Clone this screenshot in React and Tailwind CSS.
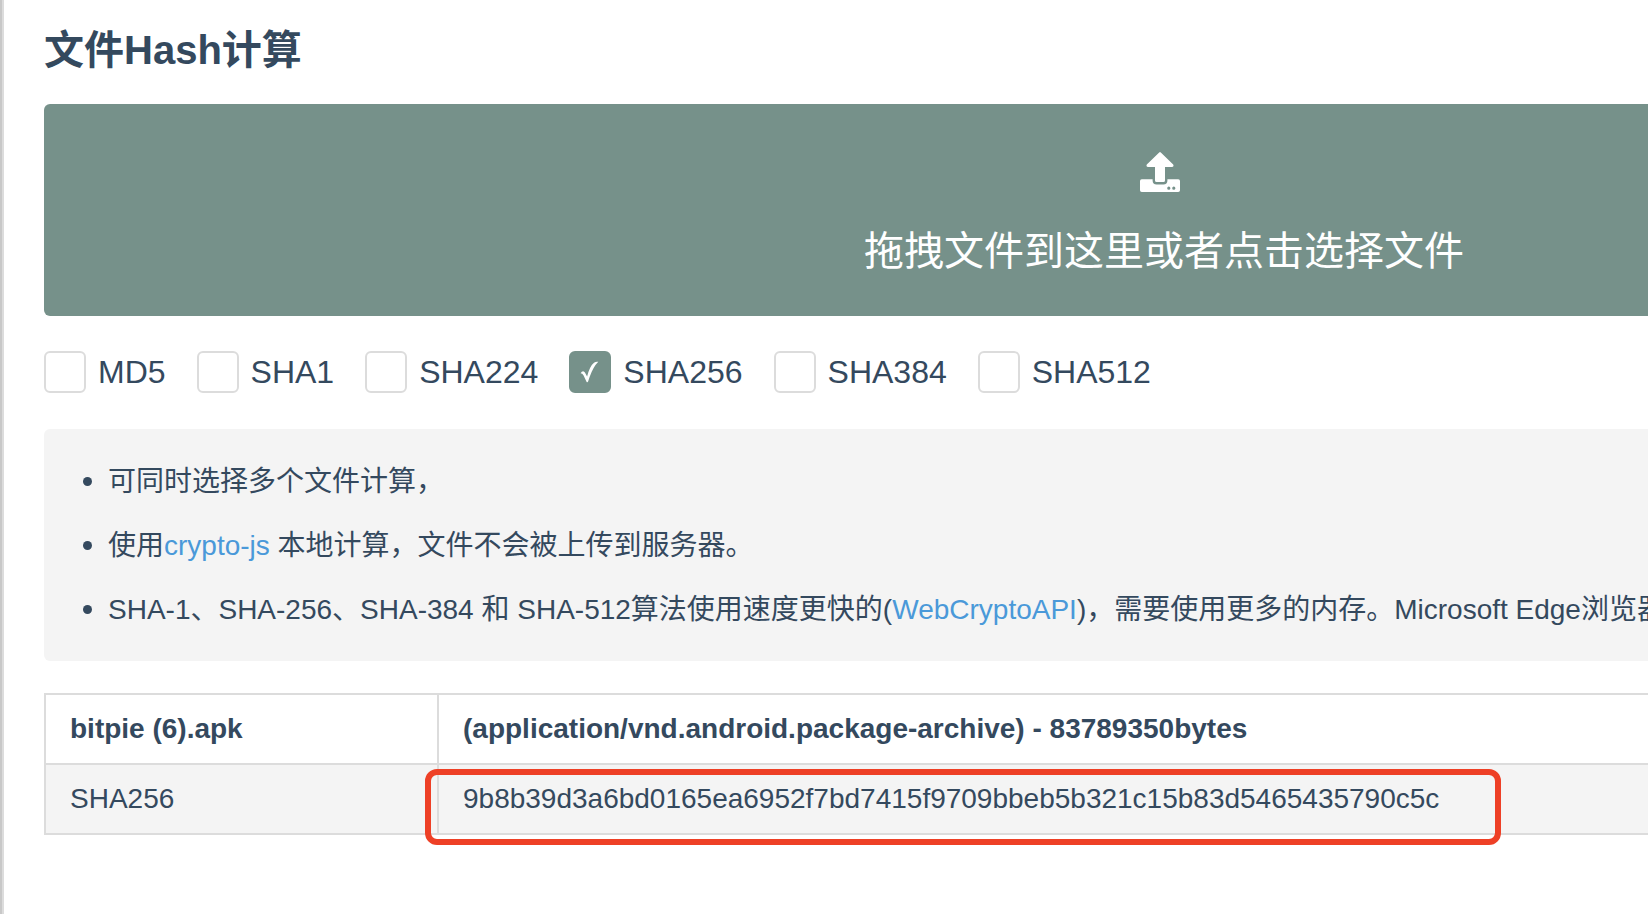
/** File Hash Page */
import React, { useRef, useState } from 'react';

const ALGORITHMS = ['MD5', 'SHA1', 'SHA224', 'SHA256', 'SHA384', 'SHA512'];

const RESULTS = [
  {
    name: 'bitpie (6).apk',
    info: '(application/vnd.android.package-archive) - 83789350bytes',
    hashes: [
      { algorithm: 'SHA256', value: '9b8b39d3a6bd0165ea6952f7bd7415f9709bbeb5b321c15b83d5465435790c5c' },
    ],
  },
];

const UploadIcon = () => (
  <svg className="w-10 h-10" viewBox="0 0 40 40" fill="currentColor" aria-hidden="true">
    <path d="M19.2 0.5 Q20 -0.3 20.8 0.5 L33.2 12.6 Q34.2 14.8 32.2 15 H25 V28.4 Q25 30 23.4 30 H16.6 Q15 30 15 28.4 V15 H7.8 Q5.8 14.8 6.8 12.6 Z" />
    <path
      fillRule="evenodd"
      d="M1.8 27.3 H12.6 V28.4 Q12.6 32.4 16.6 32.4 H23.4 Q27.4 32.4 27.4 28.4 V27.3 H38.2 Q40 27.3 40 29.1 V38.2 Q40 40 38.2 40 H1.8 Q0 40 0 38.2 V29.1 Q0 27.3 1.8 27.3 Z M28.8 34.6 a1.6 1.6 0 1 0 0 3.2 a1.6 1.6 0 1 0 0 -3.2 Z M33.8 34.6 a1.6 1.6 0 1 0 0 3.2 a1.6 1.6 0 1 0 0 -3.2 Z"
    />
  </svg>
);

const AlgorithmCheckbox = ({ name, checked, onChange }) => (
  <label className="flex items-center gap-3 text-[32px] leading-[42px] cursor-pointer">
    <span className="relative flex">
      <input
        type="checkbox"
        checked={checked}
        onChange={onChange}
        className="peer appearance-none w-[42px] h-[42px] rounded-md border-2 border-[#dcdcdc] bg-white checked:border-[#76918a] checked:bg-[#76918a]"
      />
      <svg
        className="absolute inset-0 w-full h-full text-white pointer-events-none hidden peer-checked:block"
        viewBox="0 0 42 42"
        fill="currentColor"
        aria-hidden="true"
      >
        <path d="M11.6 22.2 Q13 20 14.6 20.4 Q15.6 20.6 16.2 22 L18.1 25.6 Q20.8 15 25 11.8 Q27 10.2 29.3 10.8 Q24.4 15.6 20.6 26 L19.2 30.2 Q18.4 32.4 17.4 30.4 L14.6 24.6 Q13.4 22.2 11.6 22.2 Z" />
      </svg>
    </span>
    {name}
  </label>
);

const Note = ({ children }) => (
  <li className="before:inline-block before:size-[9px] before:mr-4 before:mb-1 before:align-middle before:rounded-full before:bg-[#34495e]">
    {children}
  </li>
);

const App = () => {
  const fileInput = useRef(null);
  const [selected, setSelected] = useState(['SHA256']);

  const handleToggle = (name) => {
    setSelected(selected.includes(name) ? selected.filter((item) => item !== name) : [...selected, name]);
  };

  return (
    <div className="min-h-screen flex overflow-hidden border-l-2 border-[#c8c8c8] bg-white text-[#34495e] font-['Liberation_Sans','Noto_Sans_CJK_SC',sans-serif]">
      <main className="flex-1 min-w-0 border-l-2 border-[#dcdcdc] pl-10 pt-5">
        {/* Content runs past the right edge of the pane */}
        <div className="-mr-[636px]">
          <h1 className="text-[40px] leading-[60px] font-bold">文件Hash计算</h1>

          {/* Drop zone */}
          <button
            type="button"
            onClick={() => fileInput.current.click()}
            className="mt-6 w-full flex flex-col items-center rounded-md bg-[#76918a] pt-12 pb-[35px] text-white cursor-pointer"
          >
            <span className="pr-2">
              <UploadIcon />
            </span>
            <span className="mt-[29px] text-[40px] leading-[60px]">拖拽文件到这里或者点击选择文件</span>
          </button>
          <input ref={fileInput} type="file" multiple aria-label="选择文件" className="hidden" />

          {/* Algorithms */}
          <div className="mt-[35px] flex gap-[31px]">
            {ALGORITHMS.map((name) => (
              <AlgorithmCheckbox
                key={name}
                name={name}
                checked={selected.includes(name)}
                onChange={() => handleToggle(name)}
              />
            ))}
          </div>

          {/* Notes */}
          <ul className="mt-9 rounded-md bg-[#f4f4f4] pt-[21px] pb-[19px] pl-[39px] text-[28px] leading-[64px] whitespace-nowrap">
            <Note>可同时选择多个文件计算，</Note>
            <Note>
              使用<a href="#crypto-js" className="text-[#4a99d9]">crypto-js</a> 本地计算，文件不会被上传到服务器。
            </Note>
            <Note>
              SHA-1、SHA-256、SHA-384 和 SHA-512算法使用速度更快的(
              <a href="#webcrypto" className="text-[#4a99d9]">WebCryptoAPI</a>
              )，需要使用更多的内存。Microsoft Edge浏览器
            </Note>
          </ul>

          {/* Results */}
          {RESULTS.map((file) => (
            <table key={file.name} className="mt-8 w-full table-fixed border-collapse text-[28px] leading-[44px] text-left">
              <thead>
                <tr>
                  <th className="w-[393px] border-2 border-[#dcdcdc] px-6 py-3 font-bold">{file.name}</th>
                  <th className="border-2 border-[#dcdcdc] px-6 py-3 font-bold">{file.info}</th>
                </tr>
              </thead>
              <tbody>
                {file.hashes.map((hash) => (
                  <tr key={hash.algorithm} className="bg-[#f4f4f4]">
                    <td className="border-2 border-[#dcdcdc] px-6 py-3">{hash.algorithm}</td>
                    <td className="border-2 border-[#dcdcdc] px-6 py-3">
                      <span className="relative inline-block">
                        {hash.value}
                        <span className="absolute -left-[38px] -right-[62px] -top-2 -bottom-6 rounded-xl border-6 border-[#ee4026]" />
                      </span>
                    </td>
                  </tr>
                ))}
              </tbody>
            </table>
          ))}
        </div>
      </main>
    </div>
  );
};

export default App;
